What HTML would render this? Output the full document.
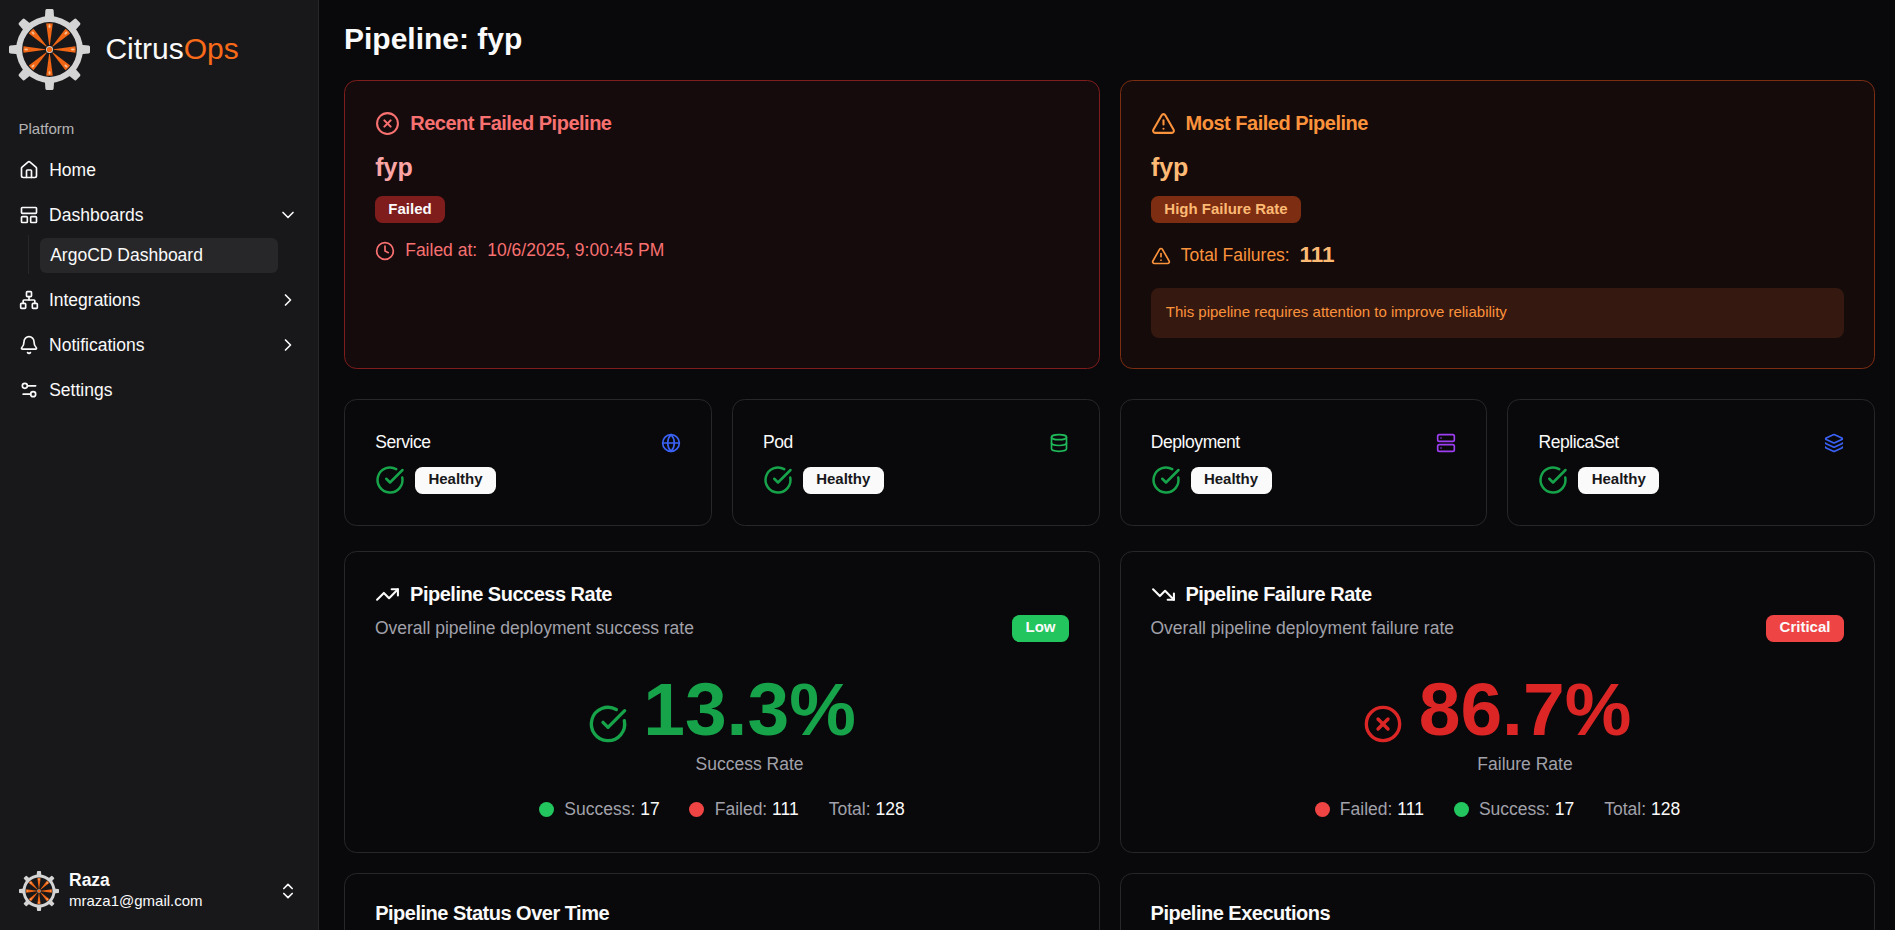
<!DOCTYPE html>
<html><head><meta charset="utf-8">
<style>
*{box-sizing:border-box;margin:0;padding:0}
html,body{width:1895px;height:930px;overflow:hidden;background:#09090b;font-family:"Liberation Sans",sans-serif;color:#fafafa}
.a{position:absolute}
.t{position:absolute;white-space:nowrap;line-height:1}
.b{font-weight:bold}
svg.i{position:absolute;fill:none;stroke:currentColor;stroke-width:2;stroke-linecap:round;stroke-linejoin:round;overflow:visible}
#sb{position:absolute;left:0;top:0;width:319px;height:930px;background:#18181b;border-right:1px solid #27272a}
.card{position:absolute;border:1px solid #27272a;border-radius:12.5px;background:#09090b}
.badge{position:absolute;height:27px;line-height:26px;border-radius:7.5px;font-size:15px;font-weight:bold;text-align:center;white-space:nowrap}
.tt{font-size:20px;font-weight:bold;letter-spacing:-0.5px}
.mut{color:#a1a1aa}
</style></head><body>
<div id="sb">
  <!-- logo -->
  <svg width="0" height="0" style="position:absolute"><defs><symbol id="gear" viewBox="-40.5 -40.5 81 81">
    <g fill="#d4d4d4">
      <path d="M0-33.4A33.4 33.4 0 1 1 0 33.4A33.4 33.4 0 1 1 0-33.4ZM0-27.4A27.4 27.4 0 1 0 0 27.4A27.4 27.4 0 1 0 0-27.4Z" fill-rule="evenodd"/>
      <path id="tooth" d="M-5.6-31.5Q-4.8-32.4-4.5-33.6L-4.1-39.2Q-3.9-40.5-2.6-40.5H2.6Q3.9-40.5 4.1-39.2L4.5-33.6Q4.8-32.4 5.6-31.5Z"/>
      <use href="#tooth" transform="rotate(45)"/><use href="#tooth" transform="rotate(90)"/><use href="#tooth" transform="rotate(135)"/>
      <use href="#tooth" transform="rotate(180)"/><use href="#tooth" transform="rotate(225)"/><use href="#tooth" transform="rotate(270)"/><use href="#tooth" transform="rotate(315)"/>
    </g>
    <g id="spk">
      <path d="M-0.35-4.2L-3.3-25.9Q0-26.6 3.3-25.9L0.35-4.2Z" fill="#f06614"/>
      <ellipse cx="0" cy="-23.3" rx="1" ry="1.9" fill="#ffe2c4" opacity=".7"/>
    </g>
    <use href="#spk" transform="rotate(45)"/><use href="#spk" transform="rotate(90)"/><use href="#spk" transform="rotate(135)"/>
    <use href="#spk" transform="rotate(180)"/><use href="#spk" transform="rotate(225)"/><use href="#spk" transform="rotate(270)"/><use href="#spk" transform="rotate(315)"/>
    <circle r="3.5" fill="#d8d0c8"/><circle r="2.6" fill="#f06614"/>
  </symbol></defs></svg>
  <svg class="a" style="left:9px;top:9px" width="81" height="81"><use href="#gear" width="81" height="81"/></svg>
  <div class="t" style="left:105.4px;top:34px;font-size:30px">Citrus<span style="color:#f76a18">Ops</span></div>

  <div class="t" style="left:18.5px;top:121px;font-size:15px;color:rgba(250,250,250,.7)">Platform</div>

  <!-- Home -->
  <svg class="i" style="left:19px;top:159.5px" width="20" height="20" viewBox="0 0 24 24"><path d="M15 21v-8a1 1 0 0 0-1-1h-4a1 1 0 0 0-1 1v8"/><path d="M3 10a2 2 0 0 1 .709-1.528l7-5.999a2 2 0 0 1 2.582 0l7 5.999A2 2 0 0 1 21 10v9a2 2 0 0 1-2 2H5a2 2 0 0 1-2-2z"/></svg>
  <div class="t" style="left:49.2px;top:162px;font-size:17.5px">Home</div>

  <!-- Dashboards -->
  <svg class="i" style="left:19px;top:205px" width="20" height="20" viewBox="0 0 24 24"><rect width="18" height="7" x="3" y="3" rx="1"/><rect width="7" height="7" x="3" y="14" rx="1"/><rect width="7" height="7" x="14" y="14" rx="1"/></svg>
  <div class="t" style="left:49.1px;top:207px;font-size:17.5px">Dashboards</div>
  <svg class="i" style="left:278px;top:205px" width="20" height="20" viewBox="0 0 24 24"><path d="m6 9 6 6 6-6"/></svg>

  <div class="a" style="left:28px;top:235px;width:1px;height:39px;background:#27272a"></div>
  <div class="a" style="left:40px;top:238px;width:238px;height:35px;background:#27272a;border-radius:6.25px"></div>
  <div class="t" style="left:50.2px;top:247px;font-size:17.5px">ArgoCD Dashboard</div>

  <!-- Integrations -->
  <svg class="i" style="left:19px;top:290px" width="20" height="20" viewBox="0 0 24 24"><rect x="16" y="16" width="6" height="6" rx="1"/><rect x="2" y="16" width="6" height="6" rx="1"/><rect x="9" y="2" width="6" height="6" rx="1"/><path d="M5 16v-3a1 1 0 0 1 1-1h12a1 1 0 0 1 1 1v3"/><path d="M12 12V8"/></svg>
  <div class="t" style="left:48.9px;top:292px;font-size:17.5px">Integrations</div>
  <svg class="i" style="left:277.5px;top:290px" width="20" height="20" viewBox="0 0 24 24"><path d="m9 18 6-6-6-6"/></svg>

  <!-- Notifications -->
  <svg class="i" style="left:19px;top:335px" width="20" height="20" viewBox="0 0 24 24"><path d="M10.268 21a2 2 0 0 0 3.464 0"/><path d="M3.262 15.326A1 1 0 0 0 4 17h16a1 1 0 0 0 .74-1.673C19.41 13.956 18 12.499 18 8A6 6 0 0 0 6 8c0 4.499-1.411 5.956-2.738 7.326"/></svg>
  <div class="t" style="left:49.1px;top:337px;font-size:17.5px">Notifications</div>
  <svg class="i" style="left:277.5px;top:335px" width="20" height="20" viewBox="0 0 24 24"><path d="m9 18 6-6-6-6"/></svg>

  <!-- Settings -->
  <svg class="i" style="left:19px;top:380px" width="20" height="20" viewBox="0 0 24 24"><path d="M20 7h-9"/><path d="M14 17H5"/><circle cx="17" cy="17" r="3"/><circle cx="7" cy="7" r="3"/></svg>
  <div class="t" style="left:49.2px;top:382px;font-size:17.5px">Settings</div>

  <!-- footer -->
  <svg class="a" style="left:19px;top:871px" width="40" height="40"><use href="#gear" width="40" height="40"/></svg>
  <div class="t b" style="left:69px;top:872px;font-size:17.5px">Raza</div>
  <div class="t" style="left:69px;top:893px;font-size:15px">mraza1@gmail.com</div>
  <svg class="i" style="left:277.5px;top:881px" width="20" height="20" viewBox="0 0 24 24"><path d="m7 15 5 5 5-5"/><path d="m7 9 5-5 5 5"/></svg>
</div>

<!-- MAIN -->
<div class="t b" style="left:344px;top:24px;font-size:30px">Pipeline: fyp</div>

<!-- Recent failed -->
<div class="card" style="left:344px;top:80px;width:756px;height:289px;border-color:#7f1d1d;background:#150a0c"></div>
<svg class="i" style="left:375px;top:111px;color:#f87171" width="25" height="25" viewBox="0 0 24 24"><circle cx="12" cy="12" r="10"/><path d="m15 9-6 6"/><path d="m9 9 6 6"/></svg>
<div class="t tt" style="left:410.2px;top:113px;color:#f87171">Recent Failed Pipeline</div>
<div class="t b" style="left:375.2px;top:154.6px;font-size:25px;color:#fca5a5">fyp</div>
<div class="badge" style="left:375px;top:196px;width:70px;background:#7f1d1d;color:#fafafa">Failed</div>
<svg class="i" style="left:375px;top:240.8px;color:#f87171" width="20" height="20" viewBox="0 0 24 24"><circle cx="12" cy="12" r="10"/><path d="M12 6v6l4 2"/></svg>
<div class="t" style="left:405.2px;top:242px;font-size:17.5px;color:#f87171">Failed at:</div>
<div class="t" style="left:487.3px;top:242px;font-size:17.5px;color:#f87171">10/6/2025, 9:00:45 PM</div>

<!-- Most failed -->
<div class="card" style="left:1120px;top:80px;width:755px;height:289px;border-color:#7c2d12;background:#150b0a"></div>
<svg class="i" style="left:1151px;top:110.6px;color:#fb923c" width="25" height="25" viewBox="0 0 24 24"><path d="m21.73 18-8-14a2 2 0 0 0-3.48 0l-8 14A2 2 0 0 0 4 21h16a2 2 0 0 0 1.73-3"/><path d="M12 9v4"/><path d="M12 17h.01"/></svg>
<div class="t tt" style="left:1185.6px;top:113px;color:#fb923c">Most Failed Pipeline</div>
<div class="t b" style="left:1150.9px;top:154.6px;font-size:25px;color:#fdba74">fyp</div>
<div class="badge" style="left:1151px;top:196px;width:150px;background:#7c2d12;color:#fdba74">High Failure Rate</div>
<svg class="i" style="left:1151px;top:246.4px;color:#fb923c" width="20" height="20" viewBox="0 0 24 24"><path d="m21.73 18-8-14a2 2 0 0 0-3.48 0l-8 14A2 2 0 0 0 4 21h16a2 2 0 0 0 1.73-3"/><path d="M12 9v4"/><path d="M12 17h.01"/></svg>
<div class="t" style="left:1180.8px;top:247px;font-size:17.5px;color:#fb923c">Total Failures:</div>
<div class="t b" style="left:1299.5px;top:243.5px;font-size:22.5px;color:#fdba74">111</div>
<div class="a" style="left:1151px;top:288px;width:693px;height:50px;border-radius:8px;background:#351810"></div>
<div class="t" style="left:1165.8px;top:304px;font-size:15px;color:#fb923c">This pipeline requires attention to improve reliability</div>

<div class="card" style="left:344px;top:399px;width:367.75px;height:127px"></div>
<div class="t" style="left:375.30px;top:434px;font-size:17.5px;letter-spacing:-0.44px">Service</div>
<svg class="i" style="left:660.75px;top:433px;color:#3b62f6" width="20" height="20" viewBox="0 0 24 24"><circle cx="12" cy="12" r="10"/><path d="M12 2a14.5 14.5 0 0 0 0 20 14.5 14.5 0 0 0 0-20"/><path d="M2 12h20"/></svg>
<svg class="i" style="left:375px;top:465px;color:#16a34a" width="30" height="30" viewBox="0 0 24 24"><path d="M21.801 10A10 10 0 1 1 17 3.335"/><path d="m9 11 3 3L22 4"/></svg>
<div class="badge" style="left:415px;top:467px;width:81px;background:#fafafa;color:#18181b;line-height:24px">Healthy</div>

<div class="card" style="left:731.75px;top:399px;width:367.75px;height:127px"></div>
<div class="t" style="left:763.05px;top:434px;font-size:17.5px;letter-spacing:-0.44px">Pod</div>
<svg class="i" style="left:1048.50px;top:433px;color:#1fb95a" width="20" height="20" viewBox="0 0 24 24"><ellipse cx="12" cy="5" rx="9" ry="3"/><path d="M3 5V19A9 3 0 0 0 21 19V5"/><path d="M3 12A9 3 0 0 0 21 12"/></svg>
<svg class="i" style="left:762.75px;top:465px;color:#16a34a" width="30" height="30" viewBox="0 0 24 24"><path d="M21.801 10A10 10 0 1 1 17 3.335"/><path d="m9 11 3 3L22 4"/></svg>
<div class="badge" style="left:802.75px;top:467px;width:81px;background:#fafafa;color:#18181b;line-height:24px">Healthy</div>

<div class="card" style="left:1119.5px;top:399px;width:367.75px;height:127px"></div>
<div class="t" style="left:1150.80px;top:434px;font-size:17.5px;letter-spacing:-0.44px">Deployment</div>
<svg class="i" style="left:1436.25px;top:433px;color:#9d3ef2" width="20" height="20" viewBox="0 0 24 24"><rect width="20" height="8" x="2" y="2" rx="2" ry="2"/><rect width="20" height="8" x="2" y="14" rx="2" ry="2"/><line x1="6" x2="6.01" y1="6" y2="6"/><line x1="6" x2="6.01" y1="18" y2="18"/></svg>
<svg class="i" style="left:1150.5px;top:465px;color:#16a34a" width="30" height="30" viewBox="0 0 24 24"><path d="M21.801 10A10 10 0 1 1 17 3.335"/><path d="m9 11 3 3L22 4"/></svg>
<div class="badge" style="left:1190.5px;top:467px;width:81px;background:#fafafa;color:#18181b;line-height:24px">Healthy</div>

<div class="card" style="left:1507.25px;top:399px;width:367.75px;height:127px"></div>
<div class="t" style="left:1538.55px;top:434px;font-size:17.5px;letter-spacing:-0.44px">ReplicaSet</div>
<svg class="i" style="left:1824.00px;top:433px;color:#3b62f6" width="20" height="20" viewBox="0 0 24 24"><path d="M12.83 2.18a2 2 0 0 0-1.66 0L2.6 6.08a1 1 0 0 0 0 1.83l8.58 3.91a2 2 0 0 0 1.66 0l8.58-3.9a1 1 0 0 0 0-1.83z"/><path d="M2 12a1 1 0 0 0 .58.91l8.6 3.91a2 2 0 0 0 1.65 0l8.58-3.9A1 1 0 0 0 22 12"/><path d="M2 17a1 1 0 0 0 .58.91l8.6 3.91a2 2 0 0 0 1.65 0l8.58-3.9A1 1 0 0 0 22 17"/></svg>
<svg class="i" style="left:1538.25px;top:465px;color:#16a34a" width="30" height="30" viewBox="0 0 24 24"><path d="M21.801 10A10 10 0 1 1 17 3.335"/><path d="m9 11 3 3L22 4"/></svg>
<div class="badge" style="left:1578.25px;top:467px;width:81px;background:#fafafa;color:#18181b;line-height:24px">Healthy</div>

<!-- Success rate -->
<div class="card" style="left:344px;top:551px;width:756px;height:302px"></div>
<svg class="i" style="left:375px;top:581.6px" width="25" height="25" viewBox="0 0 24 24"><path d="M22 7 13.5 15.5 8.5 10.5 2 17"/><path d="M16 7h6v6"/></svg>
<div class="t tt" style="left:410.1px;top:584px">Pipeline Success Rate</div>
<div class="t mut" style="left:374.9px;top:620px;font-size:17.5px">Overall pipeline deployment success rate</div>
<div class="badge" style="left:1012px;top:615px;width:57px;background:#22c55e;color:#fafafa;line-height:24px">Low</div>
<svg class="i" style="left:588.2px;top:703.5px;color:#16a34a" width="40" height="40" viewBox="0 0 24 24"><path d="M21.801 10A10 10 0 1 1 17 3.335"/><path d="m9 11 3 3L22 4"/></svg>
<div class="t b" style="left:643.2px;top:671.9px;font-size:75px;color:#16a34a">13.3%</div>
<div class="t mut" style="left:643.2px;width:212.66px;text-align:center;top:755.5px;font-size:17.5px">Success Rate</div>
<div class="a" style="left:344px;width:756px;top:799.5px;height:20px;display:flex;justify-content:center;align-items:center;font-size:17.5px;white-space:nowrap">
  <span style="width:15px;height:15px;border-radius:50%;background:#22c55e;margin-right:10px"></span><span class="mut">Success:</span>&nbsp;<span>17</span>
  <span style="width:15px;height:15px;border-radius:50%;background:#ef4444;margin:0 11px 0 29px"></span><span class="mut">Failed:</span>&nbsp;<span>111</span>
  <span class="mut" style="margin-left:30px">Total:</span>&nbsp;<span>128</span>
</div>

<!-- Failure rate -->
<div class="card" style="left:1120px;top:551px;width:755px;height:302px"></div>
<svg class="i" style="left:1151px;top:581.6px" width="25" height="25" viewBox="0 0 24 24"><path d="M22 17 13.5 8.5 8.5 13.5 2 7"/><path d="M16 17h6v-6"/></svg>
<div class="t tt" style="left:1185.4px;top:584px">Pipeline Failure Rate</div>
<div class="t mut" style="left:1150.5px;top:620px;font-size:17.5px">Overall pipeline deployment failure rate</div>
<div class="badge" style="left:1766px;top:615px;width:78px;background:#ef4444;color:#fafafa;line-height:24px">Critical</div>
<svg class="i" style="left:1362.9px;top:703.5px;color:#dc2626" width="40" height="40" viewBox="0 0 24 24"><circle cx="12" cy="12" r="10"/><path d="m15 9-6 6"/><path d="m9 9 6 6"/></svg>
<div class="t b" style="left:1418.7px;top:671.9px;font-size:75px;color:#dc2626">86.7%</div>
<div class="t mut" style="left:1418.7px;width:212.66px;text-align:center;top:755.5px;font-size:17.5px">Failure Rate</div>
<div class="a" style="left:1120px;width:755px;top:799.5px;height:20px;display:flex;justify-content:center;align-items:center;font-size:17.5px;white-space:nowrap">
  <span style="width:15px;height:15px;border-radius:50%;background:#ef4444;margin-right:10px"></span><span class="mut">Failed:</span>&nbsp;<span>111</span>
  <span style="width:15px;height:15px;border-radius:50%;background:#22c55e;margin:0 10px 0 30px"></span><span class="mut">Success:</span>&nbsp;<span>17</span>
  <span class="mut" style="margin-left:30px">Total:</span>&nbsp;<span>128</span>
</div>

<!-- bottom cards -->
<div class="card" style="left:344px;top:873px;width:756px;height:120px"></div>
<div class="t tt" style="left:375.2px;top:903px">Pipeline Status Over Time</div>
<div class="card" style="left:1120px;top:873px;width:755px;height:120px"></div>
<div class="t tt" style="left:1150.6px;top:903px">Pipeline Executions</div>
</body></html>
